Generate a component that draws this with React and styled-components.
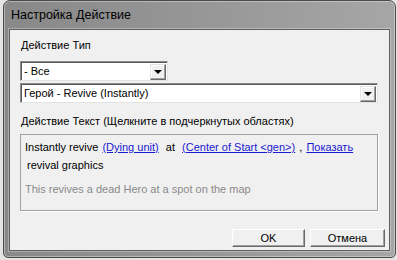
import React from "react";
import styled, { createGlobalStyle } from "styled-components";

const GlobalStyle = createGlobalStyle`
    html, body {
        margin: 0;
        padding: 0;
        background: #e4e4e4;
    }
    body {
        font-family: "Liberation Sans", Arial, sans-serif;
        font-size: 11px;
        color: #000;
    }
`

const Window = styled.div`
    margin-left: 3px;
    width: 393px;
    height: 258px;
    box-sizing: border-box;
    border: 1px solid #4a4a4a;
    border-radius: 7px 7px 5px 5px;
    background: linear-gradient(90deg, #888888 0%, #989898 55%, #a6a6a6 100%);
    box-shadow: inset 0 0 0 1px rgba(255, 255, 255, 0.35);
    display: flex;
    flex-direction: column;
    overflow: hidden;
`

const TitleBar = styled.div`
    height: 28px;
    flex-shrink: 0;
    display: flex;
    align-items: center;
    padding-left: 7px;
    font-size: 12.5px;
    color: #000;
`

const Client = styled.div`
    flex: 1;
    margin: 0 5px 6px 5px;
    background: #f0f0f0;
    border: 1px solid #5e5e5e;
    box-shadow: 0 0 0 1px rgba(255, 255, 255, 0.3);
    display: flex;
    flex-direction: column;
    padding: 9px 0 0 0;
`

const Body = styled.div`
    padding: 0 11px 0 10px;
    display: flex;
    flex-direction: column;
`

const Label = styled.div`
    line-height: 13px;
    padding-left: 1px;
    margin-top: ${p => p.$top || 0}px;
`

const Combo = styled.div`
    box-sizing: border-box;
    width: ${p => p.$width ? p.$width + "px" : "100%"};
    height: 20px;
    margin-top: ${p => p.$top || 0}px;
    background: #fff;
    border-top: 1px solid #8a8a8a;
    border-left: 1px solid #8a8a8a;
    border-right: 1px solid #e3e3e3;
    border-bottom: 1px solid #e3e3e3;
    box-shadow: inset 1px 1px 0 #5a5a5a;
    display: flex;
    align-items: center;
    justify-content: space-between;
    padding: 0 1px 0 3px;
`

const ComboText = styled.span`
    line-height: 13px;
`

const DropButton = styled.div`
    box-sizing: border-box;
    width: 16px;
    height: 16px;
    margin-top: 1px;
    background: #f0f0f0;
    border-top: 1px solid #e3e3e3;
    border-left: 1px solid #e3e3e3;
    border-right: 1px solid #696969;
    border-bottom: 1px solid #696969;
    box-shadow: inset -1px -1px 0 #a0a0a0, inset 1px 1px 0 #fff;
    display: flex;
    align-items: center;
    justify-content: center;
`

const Arrow = styled.span`
    width: 0;
    height: 0;
    border-left: 4px solid transparent;
    border-right: 4px solid transparent;
    border-top: 4px solid #000;
    margin-top: 1px;
`

const TextBox = styled.div`
    box-sizing: border-box;
    margin-top: 6px;
    width: 358px;
    height: 77px;
    border: 1px solid #a0a0a0;
    box-shadow: 1px 1px 0 #fff;
    padding: 3px 4px 0 4px;
`

const Sentence = styled.div`
    line-height: 18px;
    white-space: pre;
`

const Link = styled.a`
    color: #1a1ad0;
    text-decoration: underline;
    padding: 0 1px;
    cursor: pointer;
`

const Wrapped = styled.span`
    padding-left: 2px;
`

const Hint = styled.div`
    margin-top: 9px;
    line-height: 13px;
    color: #8a8a8a;
`

const Footer = styled.div`
    margin-top: 18px;
    padding-right: 4px;
    display: flex;
    justify-content: flex-end;
    gap: 5px;
`

const Button = styled.button`
    box-sizing: border-box;
    width: ${p => p.$width || 75}px;
    height: 18px;
    padding: 0;
    font-family: "Liberation Sans", Arial, sans-serif;
    font-size: 11px;
    color: #000;
    background: #f0f0f0;
    border-top: 1px solid #fff;
    border-left: 1px solid #fff;
    border-right: 1px solid #696969;
    border-bottom: 1px solid #696969;
    box-shadow: inset -1px -1px 0 #a0a0a0;
    cursor: pointer;
`

function App() {
    return (
        <>
            <GlobalStyle />
            <Window>
                <TitleBar>Настройка Действие</TitleBar>
                <Client>
                    <Body>
                        <Label>Действие Тип</Label>
                        <Combo $width={148} $top={9}>
                            <ComboText>- Все</ComboText>
                            <DropButton><Arrow /></DropButton>
                        </Combo>
                        <Combo $top={2}>
                            <ComboText>Герой - Revive (Instantly)</ComboText>
                            <DropButton><Arrow /></DropButton>
                        </Combo>
                        <Label $top={12}>Действие Текст (Щелкните в подчеркнутых областях)</Label>
                        <TextBox>
                            <Sentence>
                                Instantly revive <Link>(Dying unit)</Link>{"\u00a0 at \u00a0"}<Link>(Center of Start &lt;gen&gt;)</Link> , <Link>Показать</Link>
                            </Sentence>
                            <Sentence>
                                <Wrapped>revival graphics</Wrapped>
                            </Sentence>
                            <Hint>This revives a dead Hero at a spot on the map</Hint>
                        </TextBox>
                    </Body>
                    <Footer>
                        <Button $width={73}>OK</Button>
                        <Button>Отмена</Button>
                    </Footer>
                </Client>
            </Window>
        </>
    );
}

export default App;
